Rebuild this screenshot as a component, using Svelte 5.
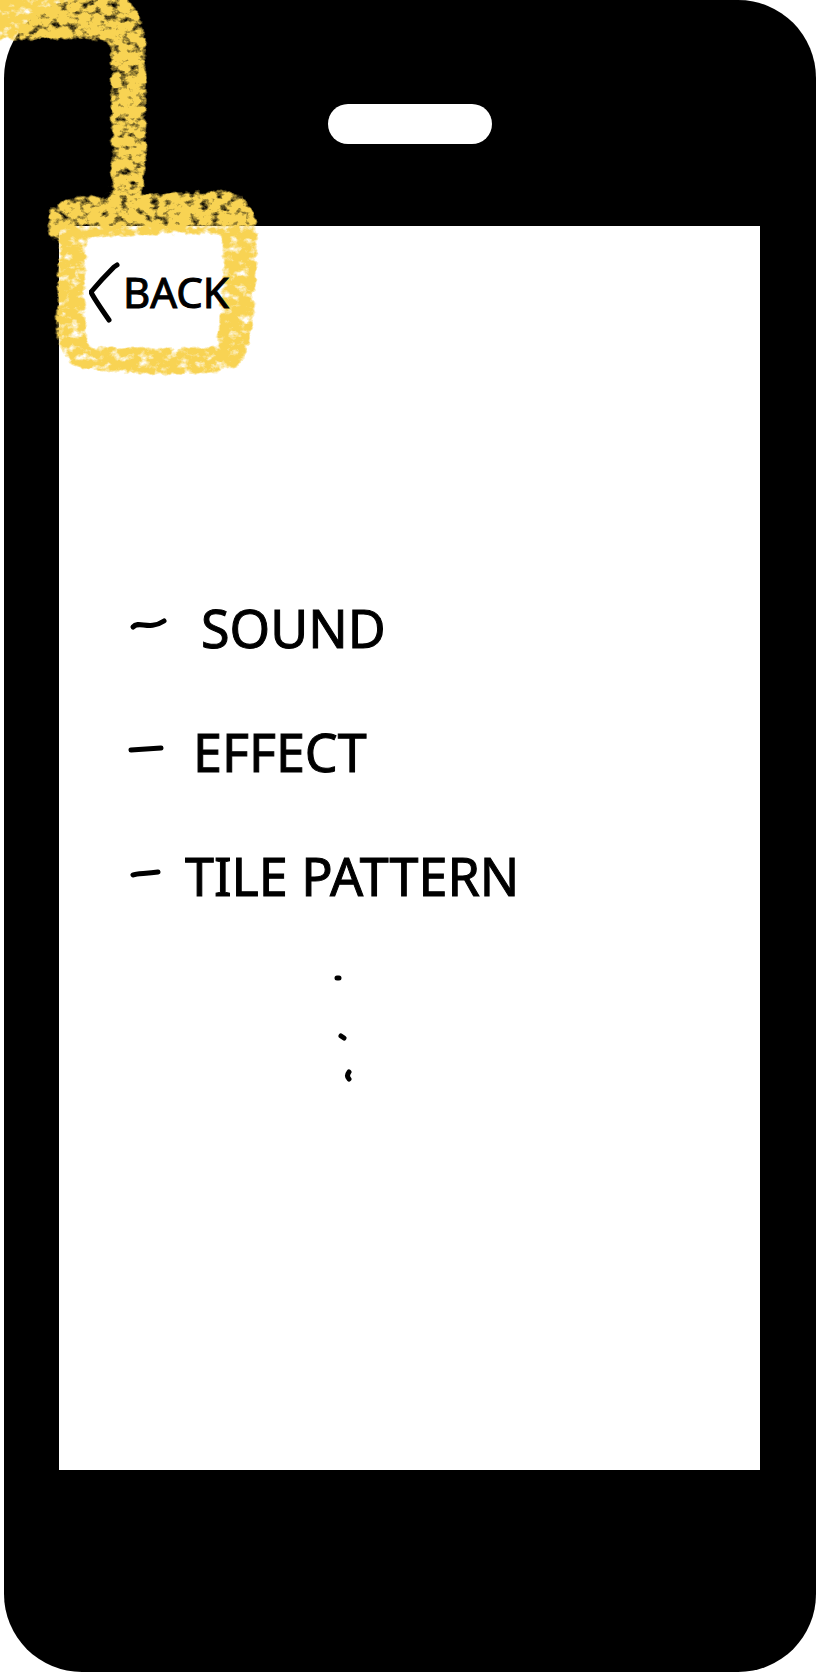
<script>
  const options = [
    { label: 'SOUND', width: 44, mark: 'M4 31C10 24 20 35 35 25' },
    { label: 'EFFECT', width: 36, mark: 'M2 30L32 28' },
    { label: 'TILE PATTERN', width: 28, mark: 'M4 31C8 29 16 30 29 28' }
  ];
</script>

<main class="phone">
  <div class="speaker"></div>
  <section class="screen">
    <button class="back" type="button">
      <svg class="chevron" viewBox="0 0 32 64" aria-hidden="true">
        <path d="M28 5L25 7Q12 20 2 32Q4 37 20 60" />
      </svg>
      BACK
    </button>
    <ul class="options">
      {#each options as option}
        <li>
          <svg viewBox="0 0 {option.width} 64" style="width: {option.width}px" aria-hidden="true">
            <path d={option.mark} />
          </svg>
          <span>{option.label}</span>
        </li>
      {/each}
    </ul>
    <svg class="more" viewBox="0 0 24 124" aria-hidden="true">
      <path d="M8 20H10M12 78L15 80M20 114Q17 118 20 121" />
    </svg>
  </section>

  <svg class="crayon" viewBox="0 0 280 400" aria-hidden="true">
    <defs>
      <filter id="grain" x="-20" y="-20" width="320" height="440" filterUnits="userSpaceOnUse" color-interpolation-filters="sRGB">
        <feTurbulence type="fractalNoise" baseFrequency="0.1 0.13" numOctaves="4" seed="8" result="noise" />
        <feGaussianBlur in="SourceAlpha" stdDeviation="2" result="soft" />
        <feComposite in="soft" in2="noise" operator="arithmetic" k1="0" k2="2.2" k3="3.1" k4="-2.7" result="rough" />
        <feMorphology in="SourceAlpha" operator="dilate" radius="1" />
        <feGaussianBlur stdDeviation="1" result="edge" />
        <feFlood flood-color="#f8d353" />
        <feComposite in2="rough" operator="in" />
        <feComposite in2="edge" operator="in" />
        <feGaussianBlur stdDeviation="0.6" />
      </filter>
    </defs>
    <g filter="url(#grain)">
      <path d="M-10 -10H112Q147 0 147 60V150Q146 175 141 208H109Q112 150 110 100Q111 60 108 43Q106 40 98 40H-10Z" />
      <path
        fill-rule="evenodd"
        d="M48 208Q60 199 76 197L130 194L230 190Q252 198 257 222Q260 240 255 300Q254 345 242 364Q230 371 205 373Q140 378 100 371Q68 371 59 348Q54 320 56 285L59 240L47 236ZM88 239Q150 234 222 235L222 275L216 346Q150 350 88 345L85 300Z"
      />
    </g>
  </svg>
</main>

<style>
  :global(body) {
    margin: 0;
    background: #fff;
  }

  .phone {
    margin: 0 4px 4px;
    padding: 104px 56px 202px 55px;
    background: #000;
    border-radius: 78px;
    color: #000;
    font-family: 'Noto Sans', 'Open Sans', sans-serif;
  }

  .speaker {
    width: 164px;
    height: 40px;
    margin: 0 auto 82px;
    border-radius: 20px;
    background: #fff;
  }

  .screen {
    box-sizing: border-box;
    min-height: 1244px;
    padding: 34px 30px;
    background: #fff;
  }

  .back {
    position: relative;
    z-index: 1;
    display: flex;
    align-items: center;
    gap: 2px;
    padding: 0;
    border: 0;
    background: none;
    color: inherit;
    font-family: inherit;
    font-size: 42px;
    line-height: 64px;
    -webkit-text-stroke: 1px #000;
  }

  .chevron {
    width: 32px;
    height: 64px;
  }

  path {
    stroke-linecap: round;
    stroke-linejoin: round;
  }

  .back path,
  .options path,
  .more path {
    fill: none;
    stroke: #000;
    stroke-width: 5px;
  }

  .options {
    display: grid;
    gap: 60px;
    margin: 272px 0 0;
    padding: 0 0 0 40px;
    list-style: none;
  }

  .options li {
    display: flex;
    align-items: center;
    gap: 28px;
    font-size: 52px;
    line-height: 64px;
    -webkit-text-stroke: 1px #000;
  }

  .options svg {
    flex: none;
    height: 64px;
    overflow: visible;
  }

  .more {
    display: block;
    width: 24px;
    height: 124px;
    margin: 50px 0 0 240px;
  }

  .crayon {
    position: absolute;
    top: 0;
    left: 0;
    width: 280px;
    height: 400px;
    pointer-events: none;
  }
</style>
